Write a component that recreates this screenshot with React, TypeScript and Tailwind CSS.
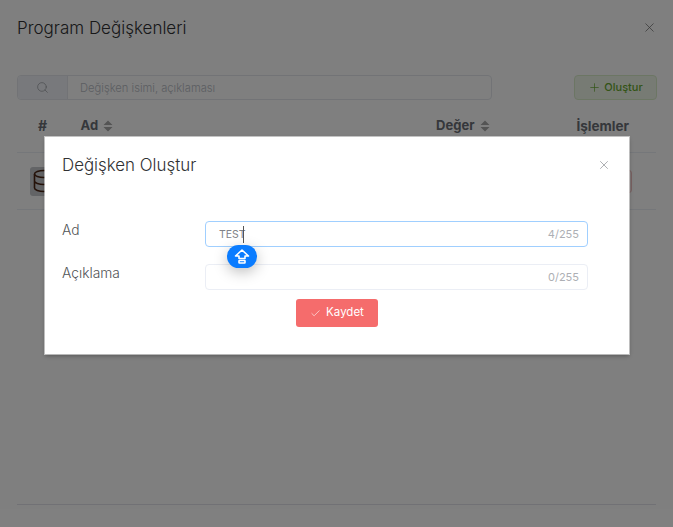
import React from "react";
import { X, Search, Plus, Check } from "lucide-react";

const font = { fontFamily: "Inter, 'Noto Sans', sans-serif" };

function SortIcon() {
  return (
    <svg width="10" height="12" viewBox="0 0 10 12" className="ml-[5px]">
      <path d="M5 0.5 L9.5 5 H0.5 Z M5 11.5 L9.5 7 H0.5 Z" fill="#a8a8a8" />
    </svg>
  );
}

function ShiftIcon() {
  return (
    <svg width="16" height="15" viewBox="0 0 16 15" fill="none" stroke="white" strokeWidth="1.6" strokeLinejoin="round">
      <path d="M8 1 L14.5 7 H11 V9.5 H5 V7 H1.5 Z" />
      <rect x="5" y="11.5" width="6" height="2.5" rx="0.4" />
    </svg>
  );
}

function Background() {
  return (
    <div className="h-[527px] w-[673px] overflow-hidden bg-white px-[17px] flex flex-col">
      <div className="flex items-center justify-between h-[28px] mt-[14px]">
        <span className="text-[17px] font-light text-[#303133] leading-none">Program Değişkenleri</span>
        <X size={15} strokeWidth={1.2} className="-mr-[1px] -mt-[2px] text-[#707070]" />
      </div>
      <div className="mt-[33px] flex h-[25px] items-stretch justify-between">
        <div className="flex w-[475px] rounded-[4px] border border-[#e4e7ed]">
          <div className="flex w-[50px] items-center justify-center bg-[#f0f3f8] border-r border-[#e4e7ed] rounded-l-[4px]">
            <Search size={13} strokeWidth={1.2} className="text-[#909399]" />
          </div>
          <span className="pl-[12px] text-[11.2px] leading-[24px] font-light text-[#b8bcc4]">Değişken isimi, açıklaması</span>
        </div>
        <div className="-mr-[1px] flex w-[83px] items-center justify-center gap-[3px] rounded-[4px] border border-[#d9ecc9] bg-[#eff7e8] text-[#67a82f]">
          <Plus size={13} strokeWidth={1.3} />
          <span className="text-[11px] font-medium">Oluştur</span>
        </div>
      </div>
      <div className="mt-[15px] flex h-[38px] items-start border-b border-[#ebeef5] pt-[1px] text-[13px] font-bold text-[#6b6f76]">
        <span className="ml-[21px] w-[42.5px] text-[14px] leading-[19px]">#</span>
        <span className="flex items-center">Ad<SortIcon /></span>
        <span className="ml-[323px] flex items-center">Değer<SortIcon /></span>
        <span className="ml-auto mr-[27px] text-[13.5px]">İşlemler</span>
      </div>
      <div className="relative flex h-[57px] items-center justify-between border-b border-[#ebeef5]">
        <div className="ml-[13px] flex h-[29px] w-[29px] items-center rounded-[3px] bg-[#c6c8cc] pl-[2px]">
          <svg width="24" height="24" viewBox="0 0 24 24" fill="none" stroke="#4a2413" strokeWidth="1.6">
            <ellipse cx="12" cy="5" rx="9.5" ry="3.5" />
            <path d="M2.5 5v14c0 1.9 4.3 3.5 9.5 3.5s9.5-1.6 9.5-3.5V5M2.5 12c0 1.9 4.3 3.5 9.5 3.5s9.5-1.6 9.5-3.5" />
          </svg>
        </div>
        <div className="mr-[24px] h-[23px] w-[20px] rounded-[3px] border border-[#f3c2c2] bg-[#fdecec]" />
      </div>
      <div className="mt-auto mb-[22px] border-t border-[#e3e3ea]" />
    </div>
  );
}

function Field({ label, count, active, value }: { label: string; count: string; active?: boolean; value?: string }) {
  return (
    <div className="flex h-[26px] items-start">
      <span className="w-[143px] text-[13.8px] font-light leading-[18px] text-[#505255]">{label}</span>
      <div className={`flex h-[26px] w-[383px] items-center justify-between rounded-[4px] border pl-[13px] pr-[8px] ${active ? "border-[#a0cfff]" : "border-[#ebeef5]"}`}>
        <span className="flex items-center pt-[1px] text-[10.5px] text-[#808288]">
          {value}
          {active && <span className="-ml-[3px] h-[17px] w-[1px] bg-[#555]" />}
        </span>
        <span className="pt-[1px] text-[11px] text-[#adafb4]">{count}</span>
      </div>
    </div>
  );
}

export default function App() {
  return (
    <div className="relative h-[527px] w-[673px] overflow-hidden" style={font}>
      <Background />
      <div className="absolute inset-0 bg-black/50" />
      <div className="absolute left-[45px] top-[137px] h-[217px] w-[584px] bg-white px-[17px] shadow-[0_0_0_1px_rgba(255,255,255,0.55),0_2px_4px_rgba(0,0,0,0.3)]">
        <div className="flex h-[57px] items-center justify-between">
          <span className="text-[16.9px] font-light text-[#303133]">Değişken Oluştur</span>
          <X size={14} strokeWidth={1.1} className="mr-[1px] -mt-[2px] text-[#808388]" />
        </div>
        <div className="mt-[27px] flex flex-col gap-[17px]">
          <Field label="Ad" count="4/255" active value="TEST" />
          <Field label="Açıklama" count="0/255" />
        </div>
        <div className="mt-[9px] flex justify-center">
          <div className="flex h-[28px] w-[82px] items-center justify-center gap-[5px] rounded-[3px] bg-[#f56c6c] text-white">
            <Check size={11} strokeWidth={1.3} />
            <span className="text-[11.5px] font-normal">Kaydet</span>
          </div>
        </div>
      </div>
      <div className="absolute left-[227px] top-[245px] flex h-[23px] w-[30px] items-center justify-center rounded-[12px] bg-[#0a7cff] shadow-[0_4px_14px_rgba(0,0,0,0.25)]">
        <ShiftIcon />
      </div>
    </div>
  );
}
